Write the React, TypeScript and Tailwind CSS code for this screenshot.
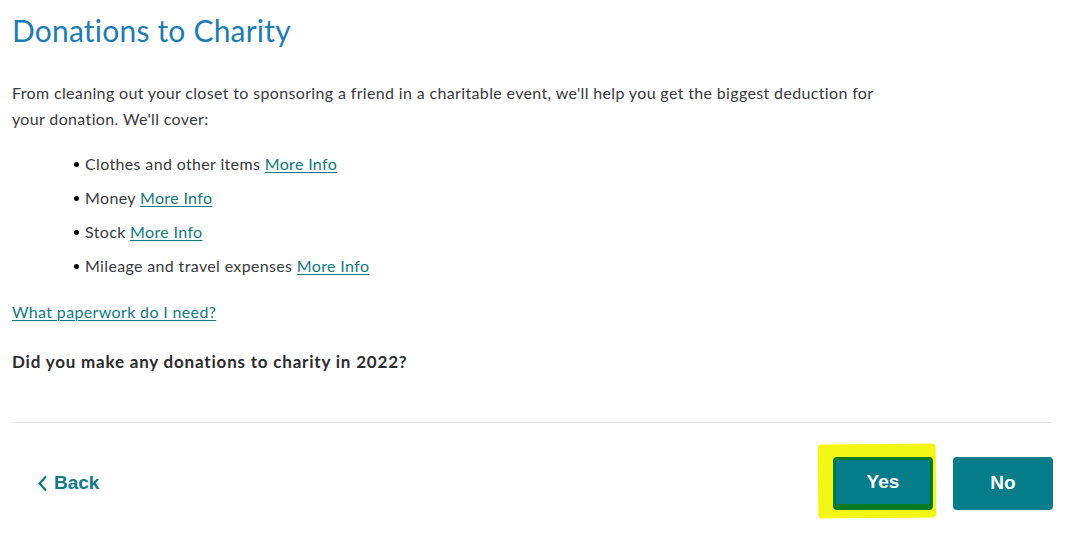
import React from 'react';

const items = [
  'Clothes and other items',
  'Money',
  'Stock',
  'Mileage and travel expenses',
];

const MoreInfo: React.FC = () => (
  <a href="#" className="text-[#0f7a80] underline underline-offset-2 decoration-1">
    More Info
  </a>
);

export default function App() {
  return (
    <div className="w-[1071px] h-[535px] bg-white overflow-hidden font-['Lato','Noto_Sans',sans-serif] text-[#393a3d]">
      <div className="px-3">
        {/* Title */}
        <h1 className="pt-[11px] text-[30px] leading-[38px] text-[#1d7db3] tracking-[0.2px]">
          Donations to Charity
        </h1>

        {/* Intro */}
        <p className="mt-[31px] w-[875px] text-[16px] leading-[26px] tracking-[0.35px]">
          From cleaning out your closet to sponsoring a friend in a charitable event, we'll help you get the biggest deduction for your donation. We'll cover:
        </p>

        <ul className="mt-[22px] pl-[62px] text-[16px] leading-[20px] tracking-[0.35px] flex flex-col gap-[14px]">
          {items.map((label) => (
            <li key={label} className="flex items-center">
              <span className="w-[5px] h-[5px] rounded-full bg-black mr-[6px]"></span>
              <span>
                {label} <MoreInfo />
              </span>
            </li>
          ))}
        </ul>

        <div className="mt-[26px] text-[16px] leading-[20px] tracking-[0.35px]">
          <a href="#" className="text-[#0f7a80] underline underline-offset-2 decoration-1">
            What paperwork do I need?
          </a>
        </div>

        <p className="mt-[30px] text-[17px] leading-[20px] font-bold tracking-[0.8px] text-[#2b2c2e]">
          Did you make any donations to charity in 2022?
        </p>

        {/* Footer */}
        <div className="mt-[50px] w-[1041px] border-t border-[#e6e7e9]"></div>

        <div className="flex items-center justify-between w-[1041px] mt-[34px] font-['Liberation_Sans',Arial,sans-serif]">
          <button className="flex items-center gap-[6px] ml-[25px] text-[#0e7a8a] text-[19px] font-bold">
            <svg width="11" height="17" viewBox="0 0 11 17" fill="none">
              <path d="M9 1.5L2.5 8.5L9 15.5" stroke="#0e7a8a" strokeWidth="2.2" />
            </svg>
            Back
          </button>

          <div className="flex items-center gap-[20px]">
            <div className="relative">
              <div className="absolute left-[-15px] top-[-13px] w-[118px] h-[74px] bg-[#f4f716] rounded-[4px] -rotate-[0.5deg]"></div>
              <button className="relative w-[100px] h-[53px] rounded-[4px] bg-[#047c8a] border-[3px] border-b-[6px] border-[#057a23] text-white text-[19px] font-bold">
                Yes
              </button>
            </div>
            <button className="w-[100px] h-[53px] rounded-[4px] bg-[#047c8a] text-white text-[19px] font-bold">
              No
            </button>
          </div>
        </div>
      </div>
    </div>
  );
}
